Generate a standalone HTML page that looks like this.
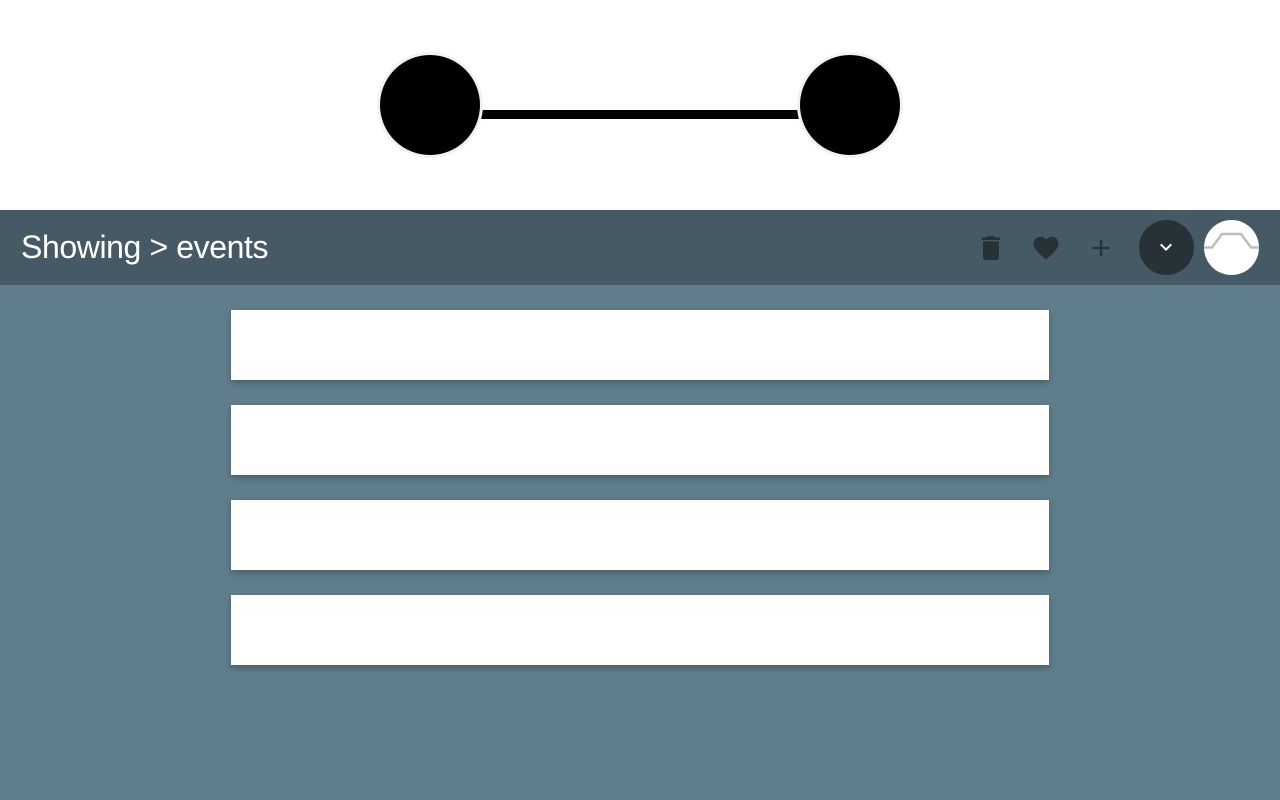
<!DOCTYPE html>
<html><head><style>
*{margin:0;padding:0;box-sizing:border-box}
body{width:1280px;height:800px;background:#fff;overflow:hidden;font-family:"Liberation Sans",sans-serif;position:relative}
.top{position:absolute;left:0;top:0;width:1280px;height:210px;background:#fff}
.c{position:absolute;width:106px;height:106px;border-radius:50%;background:#000;border:3px solid #f2f2f2;top:52px}
.line{position:absolute;left:470px;top:110px;width:340px;height:9px;background:#000}
.bar{position:absolute;left:0;top:210px;width:1280px;height:75px;background:#455a64}
.bar h1{position:absolute;left:21px;top:19px;color:#fff;font-weight:normal;font-size:32px;letter-spacing:-0.4px}
.main{position:absolute;left:0;top:285px;width:1280px;height:515px;background:#607d8b}
.card{position:absolute;left:231px;width:818px;height:70px;background:#fff;box-shadow:0 3px 6px rgba(0,0,0,.25)}
</style></head><body>
<div class="top"></div>
<div class="line"></div>
<div class="c" style="left:377px"></div>
<div class="c" style="left:797px"></div>
<div class="bar"><h1>Showing &gt; events</h1>
<svg style="position:absolute;left:975px;top:22px" width="32" height="32" viewBox="0 0 24 24"><path fill="#263238" d="M6 19c0 1.1.9 2 2 2h8c1.1 0 2-.9 2-2V7H6v12zM19 4h-3.5l-1-1h-5l-1 1H5v2h14V4z"/></svg>
<svg style="position:absolute;left:1031px;top:23px" width="30" height="30" viewBox="0 0 24 24"><path fill="#263238" d="M12 21.35l-1.45-1.32C5.4 15.36 2 12.28 2 8.5 2 5.42 4.42 3 7.5 3c1.74 0 3.41.81 4.5 2.09C13.09 3.81 14.76 3 16.5 3 19.58 3 22 5.42 22 8.5c0 3.78-3.4 6.86-8.55 11.54L12 21.35z"/></svg>
<svg style="position:absolute;left:1087px;top:24px" width="28" height="28" viewBox="0 0 24 24"><path fill="#263238" d="M19 13h-6v6h-2v-6H5v-2h6V5h2v6h6v2z"/></svg>
<div style="position:absolute;left:1139px;top:10px;width:55px;height:55px;border-radius:50%;background:#263238"></div>
<svg style="position:absolute;left:1154px;top:25px" width="24" height="24" viewBox="0 0 24 24"><path fill="#fff" d="M7.41 8.59L12 13.17l4.59-4.58L18 10l-6 6-6-6z"/></svg>
<div style="position:absolute;left:1204px;top:10px;width:55px;height:55px;border-radius:50%;background:#fff;overflow:hidden">
<svg width="55" height="55"><path d="M0 27.5H8L18 14H37L47 27.5H55" fill="none" stroke="#bdbdbd" stroke-width="2.5"/></svg></div>
</div>
<div class="main">
<div class="card" style="top:25px"></div>
<div class="card" style="top:120px"></div>
<div class="card" style="top:215px"></div>
<div class="card" style="top:310px"></div>
</div>
</body></html>
